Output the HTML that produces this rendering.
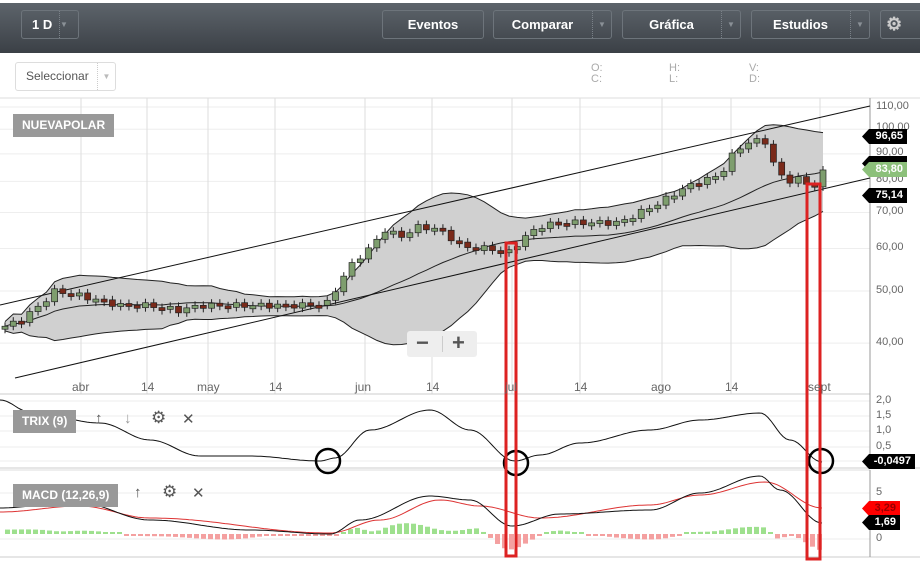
<!DOCTYPE html>
<html><head><meta charset="utf-8"><style>
*{margin:0;padding:0;box-sizing:border-box}
body{width:920px;height:564px;overflow:hidden;background:#fff;font-family:"Liberation Sans",sans-serif;position:relative}
.top{position:absolute;left:0;top:3px;width:920px;height:50px;background:linear-gradient(#5d646b,#3b4046)}
.btn{position:absolute;top:10px;height:29px;border:1px solid #6d747b;border-radius:3px;color:#fff;font-weight:bold;font-size:13px;line-height:27px;text-align:center}
.btn .ar{position:absolute;right:0;top:0;width:19px;height:27px;border-left:1px dotted #7a8188;color:#8a9096;font-size:8px;line-height:27px}
.sel{position:absolute;left:15px;top:62px;width:101px;height:29px;border:1px solid #ddd;border-radius:3px;font-size:12px;color:#555;line-height:27px;padding-left:10px}
.sel .ar{position:absolute;right:0;top:0;width:18px;height:27px;border-left:1px dotted #ccc;color:#bbb;font-size:8px;text-align:center}
.ohlc{position:absolute;font-size:11px;color:#aaa;line-height:11px}
.lbl{position:absolute;background:#999;color:#fff;font-size:12px;font-weight:bold;height:23px;line-height:23px;padding:0 9px}
.tag{position:absolute;font-size:11px;font-weight:bold;color:#fff;height:15px;line-height:15px;padding:0 4px 0 9px;clip-path:polygon(7px 0,100% 0,100% 100%,7px 100%,0 50%);text-align:right}
.ax{position:absolute;left:876px;font-size:11px;color:#666}
.ic{position:absolute;font-size:15px;color:#555}
</style></head><body>
<div class="top"></div>
<div class="btn" style="left:21px;width:58px;text-align:left;padding-left:10px">1 D<span class="ar">▼</span></div>
<div class="btn" style="left:382px;width:102px">Eventos</div>
<div class="btn" style="left:493px;width:119px;padding-right:20px">Comparar<span class="ar">▼</span></div>
<div class="btn" style="left:622px;width:119px;padding-right:20px">Gráfica<span class="ar">▼</span></div>
<div class="btn" style="left:751px;width:119px;padding-right:20px">Estudios<span class="ar">▼</span></div>
<div class="btn" style="left:880px;width:44px;text-align:left;padding-left:5px;font-size:18px;color:#ccc">⚙</div>
<div class="sel">Seleccionar<span class="ar">▼</span></div>
<div class="ohlc" style="left:591px;top:63px">O:<br>C:</div>
<div class="ohlc" style="left:669px;top:63px">H:<br>L:</div>
<div class="ohlc" style="left:749px;top:63px">V:<br>D:</div>
<svg id="s" width="920" height="564" style="position:absolute;left:0;top:0"></svg>
<div class="lbl" style="left:13px;top:114px">NUEVAPOLAR</div>
<div class="lbl" style="left:13px;top:410px">TRIX (9)</div>
<div class="lbl" style="left:13px;top:484px">MACD (12,26,9)</div>
<div class="ic" style="left:95px;top:410px">↑</div><div class="ic" style="left:124px;top:410px;color:#999">↓</div>
<div class="ic" style="left:151px;top:408px;font-size:17px">⚙</div><div class="ic" style="left:182px;top:410px">✕</div>
<div class="ic" style="left:134px;top:484px">↑</div>
<div class="ic" style="left:162px;top:482px;font-size:17px">⚙</div><div class="ic" style="left:192px;top:484px">✕</div>
<div style="position:absolute;left:407px;top:331px;width:70px;height:26px;background:#eee;border-radius:3px;font-size:22px;font-weight:bold;color:#555;line-height:24px"><span style="position:absolute;left:9px">−</span><span style="position:absolute;left:35px;top:5px;height:16px;border-left:1px solid #ccc"></span><span style="position:absolute;left:45px">+</span></div>
<div class="ax" style="top:100px">110,00</div><div class="ax" style="top:121px">100,00</div><div class="ax" style="top:146px">90,00</div><div class="ax" style="top:173px">80,00</div><div class="ax" style="top:205px">70,00</div><div class="ax" style="top:241px">60,00</div><div class="ax" style="top:284px">50,00</div><div class="ax" style="top:336px">40,00</div>
<div class="ax" style="top:394px">2,0</div><div class="ax" style="top:409px">1,5</div><div class="ax" style="top:424px">1,0</div><div class="ax" style="top:440px">0,5</div>
<div class="ax" style="top:486px">5</div><div class="ax" style="top:532px">0</div>
<div class="tag" style="left:862px;top:129px;width:45px;background:#000">96,65</div>
<div class="tag" style="left:862px;top:156px;width:45px;background:#000"></div>
<div class="tag" style="left:862px;top:162px;width:45px;background:#8cc07a">83,80</div>
<div class="tag" style="left:862px;top:188px;width:45px;background:#000">75,14</div>
<div class="tag" style="left:862px;top:454px;width:53px;background:#000">-0,0497</div>
<div class="tag" style="left:862px;top:501px;width:38px;background:#f00;color:#900">3,29</div>
<div class="tag" style="left:862px;top:515px;width:38px;background:#000">1,69</div>
<div style="position:absolute;top:380px;font-size:12px;color:#666;width:920px">
<span style="position:absolute;left:72px">abr</span><span style="position:absolute;left:141px">14</span><span style="position:absolute;left:197px">may</span><span style="position:absolute;left:269px">14</span><span style="position:absolute;left:355px">jun</span><span style="position:absolute;left:426px">14</span><span style="position:absolute;left:505px">jul</span><span style="position:absolute;left:574px">14</span><span style="position:absolute;left:651px">ago</span><span style="position:absolute;left:725px">14</span><span style="position:absolute;left:808px">sept</span></div>
<script>
var s=document.getElementById('s'),h='';
function Y(p){return 107+(Math.log(110)-Math.log(p))*233.4}
function L(a,b,c,d,col,w){h+='<line x1="'+a+'" y1="'+b+'" x2="'+c+'" y2="'+d+'" stroke="'+col+'" stroke-width="'+(w||1)+'"/>'}
L(0,98,920,98,'#ddd');
[110,100,90,80,70,60,50,40].forEach(function(p){L(0,Y(p),870,Y(p),'#eee')});
[401,416,431,447,461].forEach(function(y){L(0,y,870,y,'#eee')});
[493,539].forEach(function(y){L(0,y,870,y,'#eee')});
[81,147,208,275,365,432,512,580,662,731,820].forEach(function(x){L(x,98,x,394,'#ddd')});
L(0,394,870,394,'#ccc');L(0,468,920,468,'#ccc');L(0,470,870,470,'#ddd');L(0,557,920,557,'#ccc');
L(870,98,870,394,'#999');L(870,394,870,468,'#999');L(870,470,870,557,'#999');
var K=[[5,43],[20,44],[40,47],[55,50],[80,49],[100,48],[120,47],[150,47],[180,46],[200,47],[230,47],[260,47],[300,47],[328,47.5],[340,52],[355,57],[370,60],[385,65],[400,63],[420,66],[440,65],[460,61],[470,60],[490,60],[510,59],[520,62],[540,66],[560,67],[580,67],[600,67],[620,67],[640,70],[660,73],[680,77],[700,80],[720,82],[735,91],[750,95],[765,95],[775,85],[785,80],[800,81],[810,78],[816,79],[823,83]];
function interp(A,x){for(var i=1;i<A.length;i++)if(x<=A[i][0]){var t=(x-A[i-1][0])/(A[i][0]-A[i-1][0]);return A[i-1][1]+t*(A[i][1]-A[i-1][1])}return A[A.length-1][1]}
function cint(A,x){for(var i=1;i<A.length;i++)if(x<=A[i][0]){var t=(x-A[i-1][0])/(A[i][0]-A[i-1][0]);t=(1-Math.cos(t*Math.PI))/2;return A[i-1][1]+t*(A[i][1]-A[i-1][1])}return A[A.length-1][1]}
var N=100,xs=[],cl=[];for(var i=0;i<N;i++){var x=5+i*(818/(N-1));xs.push(x);cl.push(interp(K,x)*(1+0.012*Math.sin(i*2.3)))}
var up=[],lo=[],mid=[];
for(i=0;i<N;i++){var a=Math.max(0,i-19),sm=0,n=0;for(var j=a;j<=i;j++){sm+=Math.log(cl[j]);n++}var m=sm/n,v=0;for(j=a;j<=i;j++)v+=Math.pow(Math.log(cl[j])-m,2);var sd=Math.sqrt(v/n)*2+0.02;mid.push([xs[i],Y(Math.exp(m))]);up.push([xs[i],Y(Math.exp(m+sd))]);lo.push([xs[i],Y(Math.exp(m-sd))])}
var poly=up.concat(lo.slice().reverse()).map(function(p){return p[0].toFixed(1)+','+p[1].toFixed(1)}).join(' ');
h+='<polygon points="'+poly+'" fill="#d0d0d0"/>';
function pl(P,col){h+='<polyline fill="none" stroke="'+col+'" stroke-width="1" points="'+P.map(function(p){return p[0].toFixed(1)+','+p[1].toFixed(1)}).join(' ')+'"/>'}
pl(up,'#222');pl(lo,'#222');pl(mid,'#222');
L(0,305,870,106,'#111');L(15,378,870,178,'#111');
for(i=0;i<N;i++){var o=i?cl[i-1]:cl[0],c=cl[i],g=c>=o,y1=Y(Math.max(o,c)),y2=Y(Math.min(o,c));if(y2-y1<3){y2=y1+3}
L(xs[i],y1-4,xs[i],y2+4,'#222');h+='<rect x="'+(xs[i]-3)+'" y="'+y1+'" width="6" height="'+(y2-y1)+'" fill="'+(g?'#7e9e6e':'#7a2a1a')+'" stroke="#222" stroke-width="0.7"/>'}
function sp(A){var P=[];for(var x=0;x<=822;x+=3)P.push([x,cint(A,x)]);return P}
pl(sp([[0,400],[30,412],[100,423],[150,440],[200,456],[250,456],[320,461],[335,458],[370,430],[430,410],[470,430],[515,461],[540,455],[580,443],[650,430],[700,420],[760,413],[790,440],[822,462]]),'#111');
var B=[[0,508],[50,505],[80,503],[150,520],[250,530],[330,534],[360,520],[430,496],[470,500],[512,526],[560,514],[650,510],[700,493],[760,476],[780,490],[822,523]],R=[[0,512],[80,506],[150,518],[330,533],[380,520],[440,500],[480,506],[540,518],[650,505],[700,495],[765,482],[822,508]];
for(var x=5;x<822;x+=7){var d=(cint(R,x)-cint(B,x))*1.1;var y0=534,hh=Math.max(2,Math.min(16,Math.abs(d)));h+='<rect x="'+x+'" y="'+(d>0?y0-hh:y0)+'" width="5" height="'+hh+'" fill="'+(d>0?'#9ee08e':'#f4a0a0')+'"/>'}
pl(sp(R),'#d33');pl(sp(B),'#111');
[[328,461],[516,463],[821,461]].forEach(function(c){h+='<circle cx="'+c[0]+'" cy="'+c[1]+'" r="12" fill="none" stroke="#000" stroke-width="2.5"/>'});
h+='<rect x="506" y="243" width="10" height="313" fill="none" stroke="#d22" stroke-width="3"/><rect x="807" y="184" width="13" height="375" fill="none" stroke="#d22" stroke-width="3"/>';
s.innerHTML=h;
</script>
</body></html>
